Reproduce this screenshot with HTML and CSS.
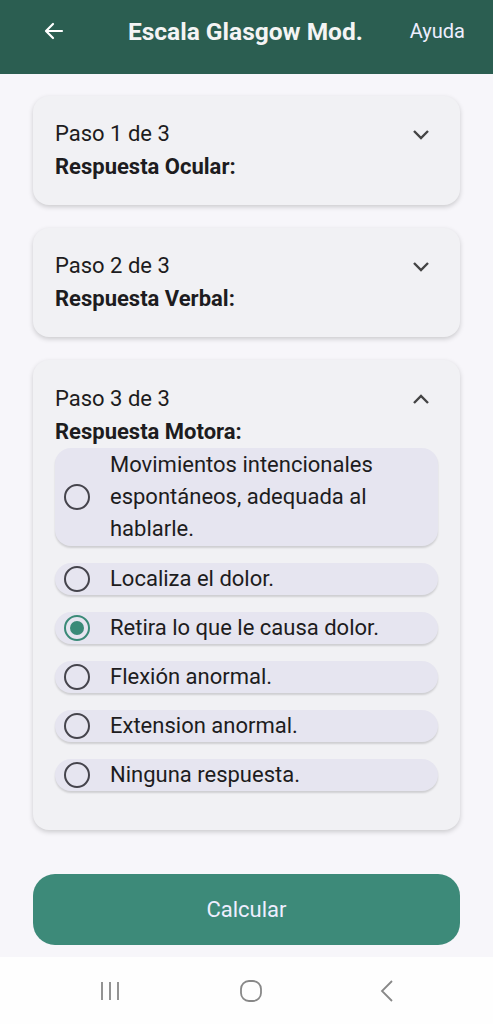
FILE: index.html
```html
<!DOCTYPE html>
<html lang="es">
<head>
  <meta charset="UTF-8" />
  <meta name="viewport" content="width=device-width, initial-scale=1.0" />
  <title>Escala Glasgow Mod.</title>
  <link rel="stylesheet" href="styles.css">
</head>
<body>
  <header class="topbar">
    <svg class="back" width="24" height="24" viewBox="0 0 24 24">
      <path d="M20 12H5M11 5l-7 7 7 7" fill="none" stroke="#fff" stroke-width="2.2" stroke-linecap="round" stroke-linejoin="round"/>
    </svg>
    <h1>Escala Glasgow Mod.</h1>
    <span class="help">Ayuda</span>
  </header>

  <main class="content">
    <section class="card">
      <div class="card-head">
        <div>
          <div class="step">Paso 1 de 3</div>
          <div class="label">Respuesta Ocular:</div>
        </div>
        <svg class="chev" width="18" height="12" viewBox="0 0 18 12"><path d="M2 3l7 7 7-7" fill="none" stroke="#444" stroke-width="2.4"/></svg>
      </div>
    </section>

    <section class="card">
      <div class="card-head">
        <div>
          <div class="step">Paso 2 de 3</div>
          <div class="label">Respuesta Verbal:</div>
        </div>
        <svg class="chev" width="18" height="12" viewBox="0 0 18 12"><path d="M2 3l7 7 7-7" fill="none" stroke="#444" stroke-width="2.4"/></svg>
      </div>
    </section>

    <section class="card open">
      <div class="card-head">
        <div>
          <div class="step">Paso 3 de 3</div>
          <div class="label">Respuesta Motora:</div>
        </div>
        <svg class="chev" width="18" height="12" viewBox="0 0 18 12"><path d="M2 10l7-7 7 7" fill="none" stroke="#444" stroke-width="2.4"/></svg>
      </div>
      <div class="options">
        <div class="option tall"><span class="radio"></span><span>Movimientos intencionales espontáneos, adequada al hablarle.</span></div>
        <div class="option"><span class="radio"></span><span>Localiza el dolor.</span></div>
        <div class="option"><span class="radio checked"></span><span>Retira lo que le causa dolor.</span></div>
        <div class="option"><span class="radio"></span><span>Flexión anormal.</span></div>
        <div class="option"><span class="radio"></span><span>Extension anormal.</span></div>
        <div class="option"><span class="radio"></span><span>Ninguna respuesta.</span></div>
      </div>
    </section>

    <button class="calc">Calcular</button>
  </main>

  <nav class="sysnav">
    <svg width="24" height="22" viewBox="0 0 24 22"><path d="M4 2v18M12 2v18M20 2v18" stroke="#888" stroke-width="1.8"/></svg>
    <svg width="24" height="24" viewBox="0 0 24 24"><rect x="2" y="2" width="20" height="20" rx="8" fill="none" stroke="#888" stroke-width="1.8"/></svg>
    <svg width="16" height="24" viewBox="0 0 16 24"><path d="M13 2L3 12l10 10" fill="none" stroke="#888" stroke-width="1.8"/></svg>
  </nav>
</body>
</html>
```

FILE: styles.css
```css
body {
  margin: 0;
  font-family: Roboto, "Noto Sans", sans-serif;
  background-color: #f7f6fa;
  color: #1d1c20;
  width: 493px;
  height: 1024px;
  display: flex;
  flex-direction: column;
}
.topbar {
  height: 74px;
  background-color: #2b5e51;
  display: flex;
  align-items: center;
  padding: 0 28px 12px 42px;
  color: #fff;
  box-sizing: border-box;
}
.topbar h1 {
  flex: 1;
  margin: 0;
  font-size: 24.5px;
  font-weight: 700;
  text-align: center;
  color: #f4f4f4;
  padding-left: 15px;
}
.help {
  font-size: 20px;
  color: #eef;
}
.content {
  flex: 1;
  padding: 22px 33px 0;
  display: flex;
  flex-direction: column;
  gap: 23px;
}
.card {
  background-color: #f1f1f4;
  border-radius: 16px;
  padding: 21px 22px 22px;
  box-shadow: 0 2px 5px rgba(0, 0, 0, 0.18);
}
.card.open {
  padding-top: 22px;
  padding-bottom: 39px;
}
.card-head {
  display: flex;
  justify-content: space-between;
  align-items: flex-start;
}
.step {
  font-size: 22px;
  line-height: 34px;
}
.label {
  font-size: 22px;
  font-weight: 700;
  line-height: 32px;
}
.chev {
  margin: 11px 8px 0 0;
}
.options {
  display: flex;
  flex-direction: column;
  gap: 17px;
}
.option {
  display: flex;
  align-items: center;
  gap: 20px;
  background-color: #e6e5f0;
  border-radius: 16px;
  padding: 0 10px 0 9px;
  min-height: 32px;
  font-size: 22px;
  line-height: 32px;
  box-shadow: 0 2px 2px rgba(0, 0, 0, 0.14);
}
.option.tall {
  padding-top: 1px;
  padding-bottom: 1px;
}
.radio {
  flex: none;
  width: 22px;
  height: 22px;
  border: 2.5px solid #45444c;
  border-radius: 50%;
  position: relative;
}
.radio.checked {
  border-color: #3a8a78;
}
.radio.checked::after {
  content: "";
  position: absolute;
  left: 4px;
  top: 4px;
  width: 14px;
  height: 14px;
  border-radius: 50%;
  background-color: #3a8a78;
}
.calc {
  margin-top: 21px;
  height: 71px;
  border: none;
  border-radius: 22px;
  background-color: #3d8a79;
  color: #eef;
  font-family: inherit;
  font-size: 22px;
}
.sysnav {
  height: 67px;
  background-color: #fefefe;
  display: flex;
  align-items: center;
  justify-content: space-between;
  padding: 0 98px 0 98px;
}
```
